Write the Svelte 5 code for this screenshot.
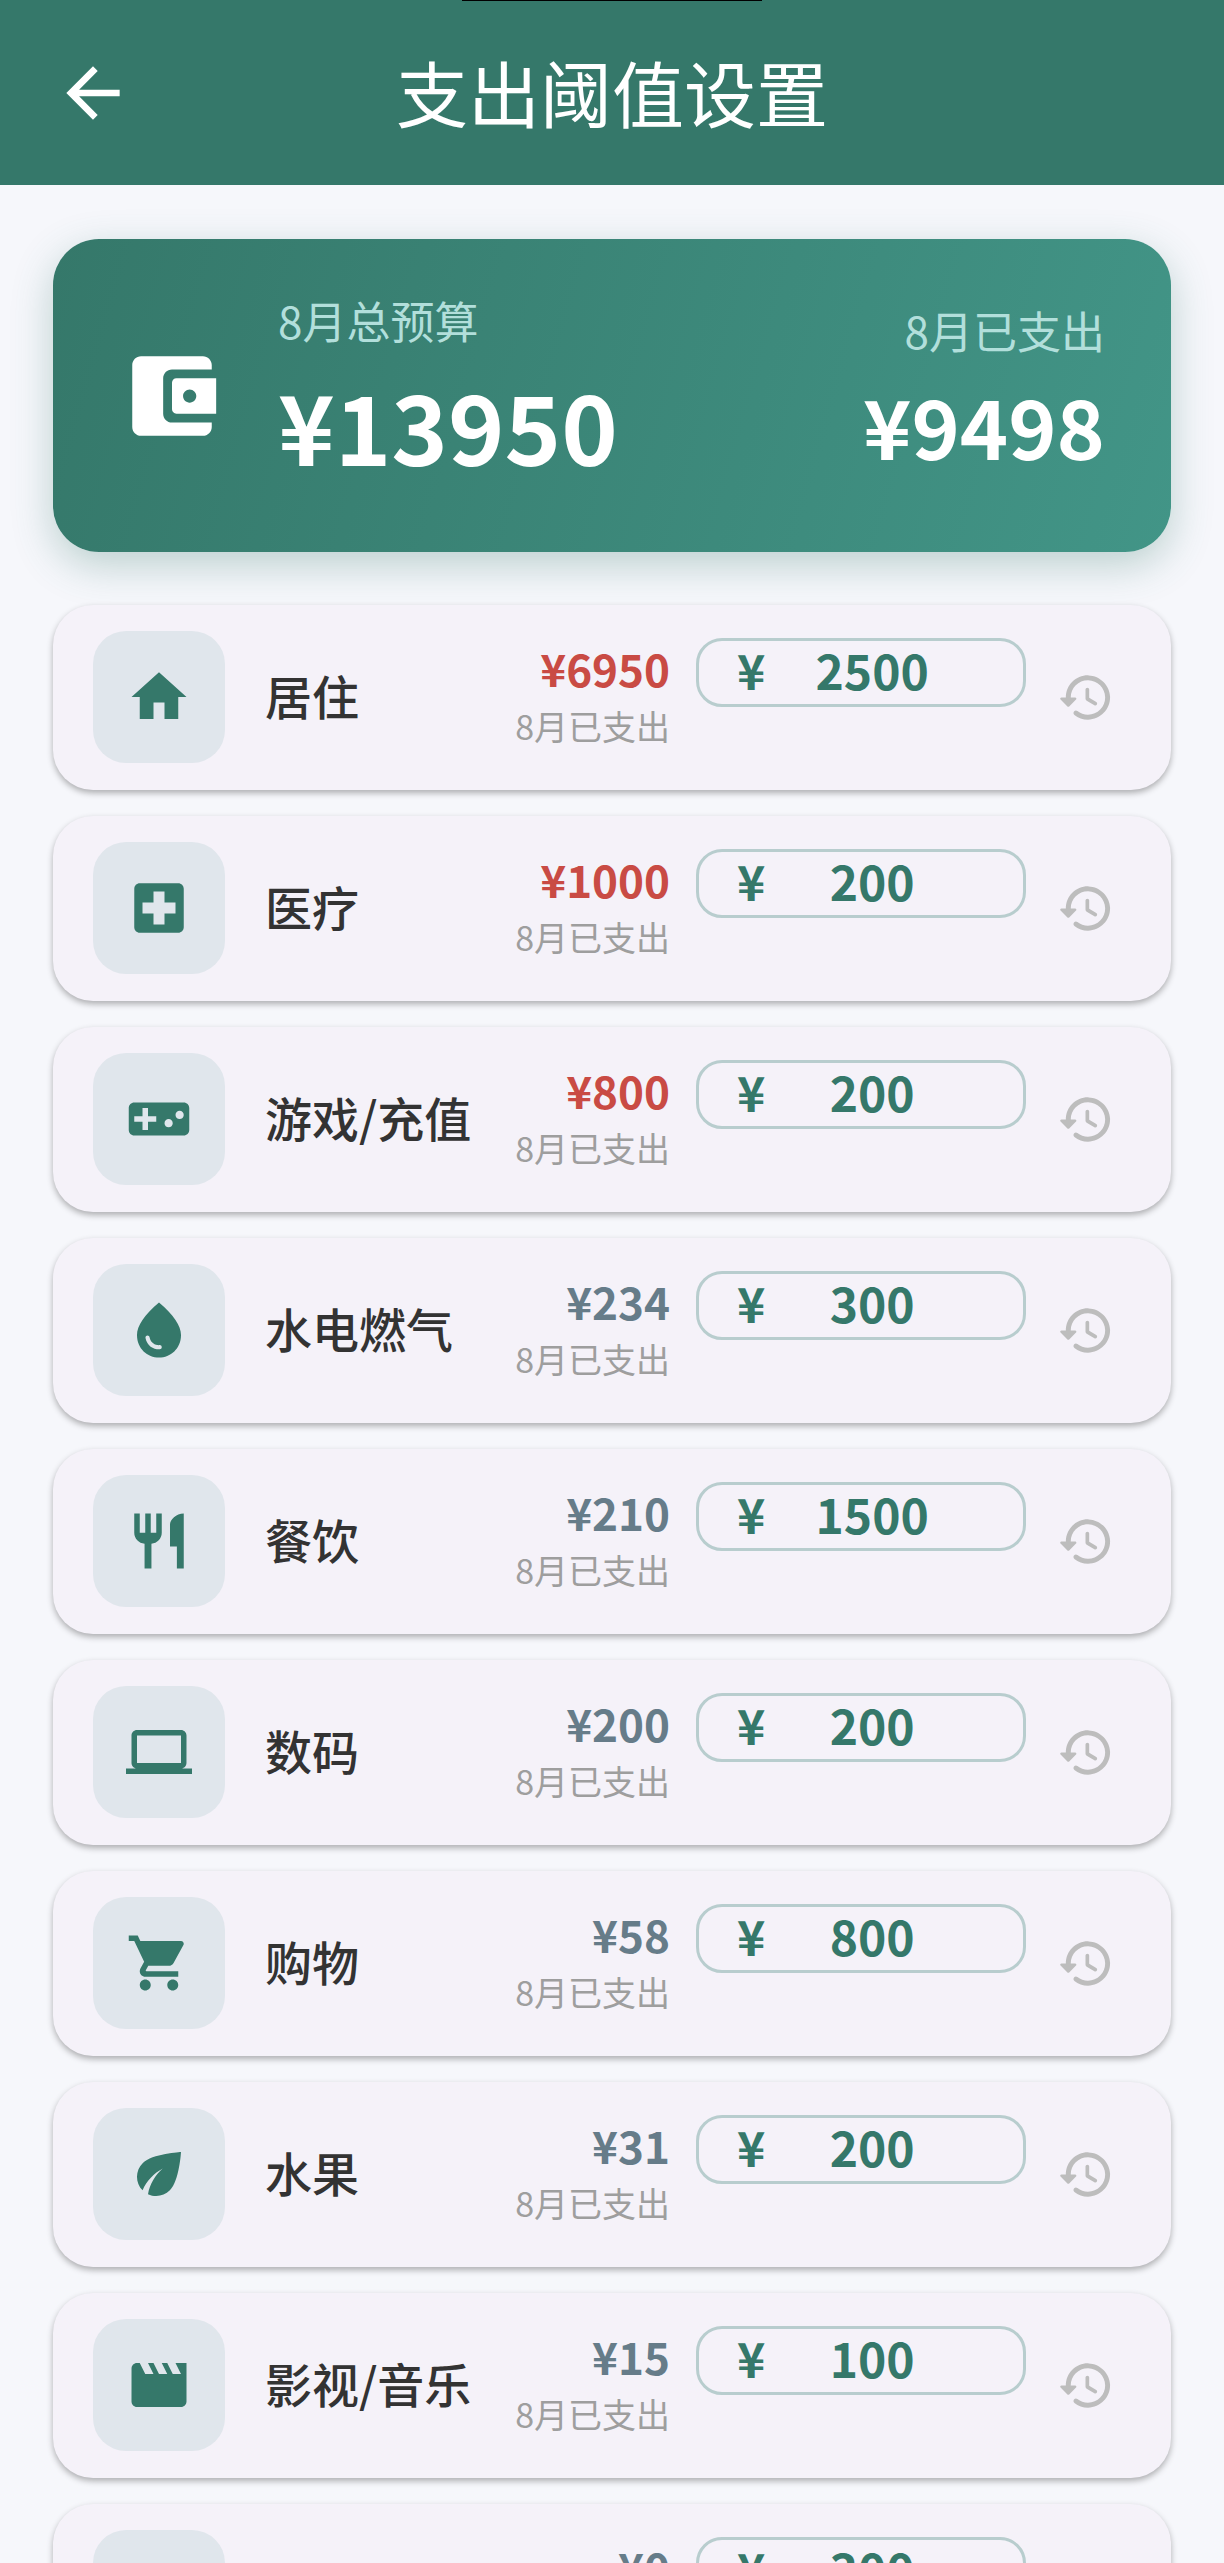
<script lang="ts">
  interface Category {
    name: string;
    icon: string;
    spent: number;
    budget: number;
  }

  const icons: Record<string, string> = {
    back: 'M20 11H7.83l5.59-5.59L12 4l-8 8 8 8 1.41-1.41L7.83 13H20v-2z',
    wallet:
      'M10 16V8c0-1.1.89-2 2-2h9V5c0-1.1-.9-2-2-2H5c-1.11 0-2 .9-2 2v14c0 1.1.89 2 2 2h14c1.1 0 2-.9 2-2v-1h-9c-1.11 0-2-.9-2-2zm3-8c-.55 0-1 .45-1 1v6c0 .55.45 1 1 1h9V8h-9zm3 5.5c-.83 0-1.5-.67-1.5-1.5s.67-1.5 1.5-1.5 1.5.67 1.5 1.5-.67 1.5-1.5 1.5z',
    history:
      'M13.26 3C8.17 2.86 4 6.95 4 12H2.21c-.45 0-.67.54-.35.85l2.79 2.8c.2.2.51.2.71 0l2.79-2.8c.31-.31.09-.85-.36-.85H6c0-3.9 3.18-7.05 7.1-7 3.72.05 6.85 3.18 6.9 6.9.05 3.91-3.1 7.1-7 7.1-1.61 0-3.1-.55-4.28-1.48-.4-.31-.96-.28-1.32.08-.42.43-.39 1.13.08 1.49C9 20.29 10.91 21 13 21c5.05 0 9.14-4.17 9-9.26-.13-4.69-4.05-8.61-8.74-8.74zm-.51 5c-.41 0-.75.34-.75.75v3.68c0 .35.19.68.49.86l3.12 1.85c.36.21.82.09 1.03-.26.21-.36.09-.82-.26-1.03l-2.88-1.71v-3.4c0-.4-.34-.74-.75-.74z',
    home: 'M10 20v-6h4v6h5v-8h3L12 3 2 12h3v8z',
    hospital:
      'M19 3H5c-1.1 0-1.99.9-1.99 2L3 19c0 1.1.9 2 2 2h14c1.1 0 2-.9 2-2V5c0-1.1-.9-2-2-2zm-1 11h-4v4h-4v-4H6v-4h4V6h4v4h4v4z',
    game: 'M21 6H3c-1.1 0-2 .9-2 2v8c0 1.1.9 2 2 2h18c1.1 0 2-.9 2-2V8c0-1.1-.9-2-2-2zm-10 7H8v3H6v-3H3v-2h3V8h2v3h3v2zm4.5 2c-.83 0-1.5-.67-1.5-1.5s.67-1.5 1.5-1.5 1.5.67 1.5 1.5-.67 1.5-1.5 1.5zm4-3c-.83 0-1.5-.67-1.5-1.5S18.67 9 19.5 9s1.5.67 1.5 1.5-.67 1.5-1.5 1.5z',
    water:
      'M12 2c-5.33 4.55-8 8.48-8 11.8 0 4.98 3.8 8.2 8 8.2s8-3.22 8-8.2c0-3.32-2.67-7.25-8-11.8zM7.83 14c.37 0 .67.26.74.62.41 2.22 2.28 2.98 3.64 2.87.43-.02.79.32.79.75 0 .4-.32.73-.72.75-2.13.13-4.62-1.09-5.19-4.12C7.01 14.42 7.37 14 7.83 14z',
    restaurant:
      'M11 9H9V2H7v7H5V2H3v7c0 2.12 1.66 3.84 3.75 3.97V22h2.5v-9.03C11.34 12.84 13 11.12 13 9V2h-2v7zm5-3v8h2.5v8H21V2c-2.76 0-5 2.24-5 4z',
    laptop:
      'M20 18c1.1 0 1.99-.9 1.99-2L22 6c0-1.1-.9-2-2-2H4c-1.1 0-2 .9-2 2v10c0 1.1.9 2 2 2H0v2h24v-2h-4zM4 6h16v10H4V6z',
    cart: 'M7 18c-1.1 0-1.99.9-1.99 2S5.9 22 7 22s2-.9 2-2-.9-2-2-2zM1 2v2h2l3.6 7.59-1.35 2.45c-.16.28-.25.61-.25.96 0 1.1.9 2 2 2h12v-2H7.42c-.14 0-.25-.11-.25-.25l.03-.12.9-1.63h7.45c.75 0 1.41-.41 1.75-1.03l3.58-6.49c.08-.14.12-.31.12-.48 0-.55-.45-1-1-1H5.21l-.94-2H1zm16 16c-1.1 0-1.99.9-1.99 2s.89 2 1.99 2 2-.9 2-2-.9-2-2-2z',
    eco: 'M6.05 8.05c-2.73 2.73-2.73 7.15-.02 9.88 1.47-3.4 4.09-6.24 7.36-7.93-2.77 2.34-4.71 5.61-5.39 9.32 2.6 1.23 5.8.78 7.95-1.37C19.43 14.47 20 4 20 4S9.53 4.57 6.05 8.05z',
    movie:
      'M18 4l2 4h-3l-2-4h-2l2 4h-3l-2-4H8l2 4H7L5 4H4c-1.1 0-1.99.9-1.99 2L2 18c0 1.1.9 2 2 2h16c1.1 0 2-.9 2-2V4h-4z'
  };

  const month = 8;

  let categories: Category[] = $state([
    { name: '居住', icon: 'home', spent: 6950, budget: 2500 },
    { name: '医疗', icon: 'hospital', spent: 1000, budget: 200 },
    { name: '游戏/充值', icon: 'game', spent: 800, budget: 200 },
    { name: '水电燃气', icon: 'water', spent: 234, budget: 300 },
    { name: '餐饮', icon: 'restaurant', spent: 210, budget: 1500 },
    { name: '数码', icon: 'laptop', spent: 200, budget: 200 },
    { name: '购物', icon: 'cart', spent: 58, budget: 800 },
    { name: '水果', icon: 'eco', spent: 31, budget: 200 },
    { name: '影视/音乐', icon: 'movie', spent: 15, budget: 100 },
    { name: '', icon: '', spent: 0, budget: 300 }
  ]);
</script>

{#snippet icon(name: string)}
  <svg class="icon" viewBox="0 0 24 24" aria-hidden="true">
    <path d={icons[name]} />
  </svg>
{/snippet}

<div class="page">
  <header class="app-bar">
    <span class="notch"></span>
    <button type="button" class="back" aria-label="返回">{@render icon('back')}</button>
    <h1>支出阈值设置</h1>
  </header>

  <main>
    <section class="summary">
      <span class="wallet">{@render icon('wallet')}</span>
      <div class="total">
        <p class="caption">{month}月总预算</p>
        <p class="amount">¥13950</p>
      </div>
      <div class="total used">
        <p class="caption">{month}月已支出</p>
        <p class="amount">¥9498</p>
      </div>
    </section>

    <ul class="list">
      {#each categories as item, i}
        <li class="row">
          <span class="badge">
            {#if item.icon}{@render icon(item.icon)}{/if}
          </span>
          <span class="name">{item.name}</span>
          <div class="spent">
            <span class="value" class:over={item.spent > item.budget}>¥{item.spent}</span>
            <span class="hint">{month}月已支出</span>
          </div>
          <div class="field">
            <label for="budget-{i}">¥</label>
            <input
              id="budget-{i}"
              type="text"
              inputmode="numeric"
              bind:value={item.budget}
            />
          </div>
          <button type="button" class="history" aria-label="历史">
            {@render icon('history')}
          </button>
        </li>
      {/each}
    </ul>
  </main>
</div>

<style>
  :global(body) {
    margin: 0;
    background: #f6f7fb;
  }

  .page {
    --green: #35786a;
    display: flex;
    flex-direction: column;
    height: 100vh;
    overflow: hidden;
    background: #f6f7fb;
    color: #333;
    font-family: 'Noto Sans CJK SC', 'Noto Sans', sans-serif;
  }

  .icon {
    display: block;
    width: 100%;
    height: 100%;
    fill: currentColor;
  }

  button {
    padding: 0;
    border: none;
    background: none;
    cursor: pointer;
  }

  h1,
  p {
    margin: 0;
  }

  .app-bar {
    position: relative;
    display: grid;
    grid-template-columns: 80px 1fr 80px;
    align-items: center;
    flex-shrink: 0;
    height: 185px;
    padding: 0 53px;
    box-sizing: border-box;
    background: var(--green);
    color: #fff;
  }

  .notch {
    position: absolute;
    top: 0;
    left: 50%;
    width: 300px;
    height: 1px;
    margin-left: -150px;
    background: #000;
  }

  .back {
    width: 80px;
    height: 80px;
    color: inherit;
  }

  h1 {
    font-size: 72px;
    font-weight: 400;
    line-height: 108px;
    padding-bottom: 4px;
    text-align: center;
  }

  main {
    display: flex;
    flex-direction: column;
    gap: 53px;
    flex: 1;
    min-height: 0;
    padding: 54px 53px 0;
  }

  .summary {
    display: flex;
    align-items: center;
    gap: 53px;
    flex-shrink: 0;
    padding: 52px 66px 51px;
    border-radius: 46px;
    background: linear-gradient(106deg, #35786a, #429587);
    box-shadow: 0 13px 40px rgba(53, 120, 106, 0.3);
    color: #fff;
  }

  .wallet {
    width: 106px;
    height: 106px;
  }

  .caption {
    color: #b2dfdb;
    font-size: 44px;
    line-height: 58px;
  }

  .amount {
    font-size: 96px;
    font-weight: 700;
    line-height: 152px;
  }

  .used {
    margin-left: auto;
    text-align: right;
  }

  .used .amount {
    font-size: 82px;
    line-height: 132px;
  }

  .list {
    display: flex;
    flex-direction: column;
    gap: 26px;
    margin: 0;
    padding: 0;
    list-style: none;
  }

  .row {
    display: flex;
    align-items: center;
    flex-shrink: 0;
    padding: 26px 40px 27px;
    border-radius: 40px;
    background: #f5f2f9;
    box-shadow: 0 3px 6px rgba(0, 0, 0, 0.3);
  }

  .badge {
    display: grid;
    place-items: center;
    width: 132px;
    height: 132px;
    border-radius: 33px;
    background: #e0e6ec;
    color: var(--green);
  }

  .badge .icon {
    width: 66px;
    height: 66px;
  }

  .name {
    flex: 1;
    margin-left: 40px;
    padding-bottom: 4px;
    font-size: 47px;
    font-weight: 500;
    line-height: 64px;
  }

  .spent {
    display: flex;
    flex-direction: column;
    margin-right: 26px;
    text-align: right;
    line-height: 57px;
  }

  .value {
    color: #667c89;
    font-size: 44px;
    font-weight: 700;
  }

  .value.over {
    color: #c94b44;
  }

  .hint {
    color: #9e9e9e;
    font-size: 34px;
  }

  .field {
    display: flex;
    align-items: center;
    align-self: flex-start;
    width: 330px;
    height: 69px;
    margin-top: 7px;
    padding: 0 44px 8px 38px;
    box-sizing: border-box;
    border: 3px solid #b8cdce;
    border-radius: 26px;
    color: var(--green);
    font-size: 48px;
    font-weight: 700;
    line-height: 56px;
  }

  .field input {
    flex: 1;
    min-width: 0;
    height: 56px;
    padding: 0;
    border: none;
    outline: none;
    background: none;
    color: inherit;
    font: inherit;
    text-align: center;
  }

  .history {
    display: grid;
    place-items: center;
    width: 88px;
    height: 88px;
    margin-left: 15px;
    margin-right: 2px;
    color: #bdbdbd;
  }

  .history .icon {
    width: 59px;
    height: 59px;
  }
</style>
